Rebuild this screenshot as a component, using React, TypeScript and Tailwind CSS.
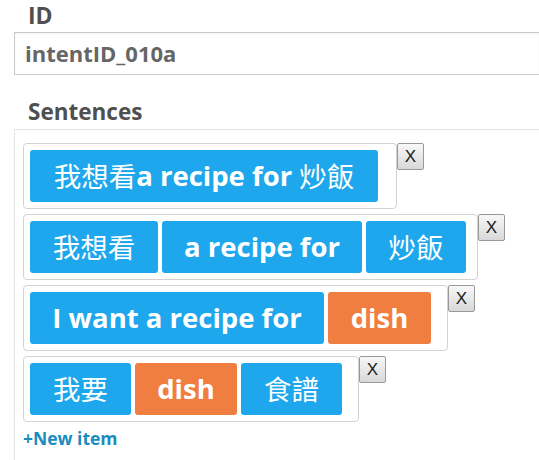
import React from "react";

type Tag = { text: React.ReactNode; w: number; orange?: boolean };

const CJK = ({ children }: { children: React.ReactNode }) => (
  <span className="font-normal [font-family:'Noto_Sans_CJK_TC','Noto_Sans_CJK_SC',sans-serif]">{children}</span>
);

function Row({ tags, pr }: { tags: Tag[]; pr: string }) {
  return (
    <div className="flex items-start">
      <div className={`flex gap-[4px] border border-[#d2d2d2] rounded-[4px] bg-white pl-[6px] pt-[6px] pb-[6px] ${pr}`}>
        {tags.map((t, i) => (
          <div
            key={i}
            style={{ width: t.w }}
            className={`h-[52px] shrink-0 rounded-[3px] flex items-center justify-center text-white text-[27.5px] font-bold whitespace-nowrap ${t.orange ? "bg-[#f07e41]" : "bg-[#1ea7ec]"}`}
          >
            {t.text}
          </div>
        ))}
      </div>
      <button className="shrink-0 w-[27px] h-[27px] border border-[#999] rounded-[2px] bg-gradient-to-b from-[#f8f8f8] to-[#d8d8d8] text-[#1a1a1a] text-[17px] leading-none flex items-center justify-center [font-family:'Liberation_Sans',Arial,sans-serif]">
        X
      </button>
    </div>
  );
}

export default function App() {
  return (
    <div className="w-[539px] h-[460px] overflow-hidden bg-white [font-family:'Open_Sans',sans-serif]">
      <div className="pt-[1px] pl-[28px] text-[23px] leading-[28px] font-bold text-[#4f4f4f]">ID</div>
      <div className="mt-[3px] ml-[14px] h-[43px] border border-r-0 border-[#c9c9c9] pl-[10px] text-[22px] leading-[41px] font-bold text-[#666] shadow-[inset_0_1px_2px_rgba(0,0,0,0.06)]">
        intentID_010a
      </div>
      <div className="mt-[23px] pl-[28px] text-[22.5px] leading-[28px] font-bold text-[#4f4f4f]">Sentences</div>
      <div className="mt-[3px] ml-[14px] h-[400px] border-t border-l border-[#e4e4e4] pl-[8px] pt-[13px]">
        <div className="flex flex-col gap-[5px]">
          <Row
            pr="pr-[18px]"
            tags={[
              {
                w: 348,
                text: (
                  <>
                    <CJK>我想看</CJK>a recipe for&nbsp;<CJK>炒飯</CJK>
                  </>
                ),
              },
            ]}
          />
          <Row
            pr="pr-[11px]"
            tags={[
              { w: 128, text: <CJK>我想看</CJK> },
              { w: 200, text: "a recipe for" },
              { w: 100, text: <CJK>炒飯</CJK> },
            ]}
          />
          <Row
            pr="pr-[16px]"
            tags={[
              { w: 294, text: "I want a recipe for" },
              { w: 103, text: "dish", orange: true },
            ]}
          />
          <Row
            pr="pr-[16px]"
            tags={[
              { w: 101, text: <CJK>我要</CJK> },
              { w: 102, text: "dish", orange: true },
              { w: 101, text: <CJK>食譜</CJK> },
            ]}
          />
        </div>
        <div className="mt-[4px] text-[17.5px] leading-[24px] font-bold text-[#1a8cbd]">+New item</div>
      </div>
    </div>
  );
}
